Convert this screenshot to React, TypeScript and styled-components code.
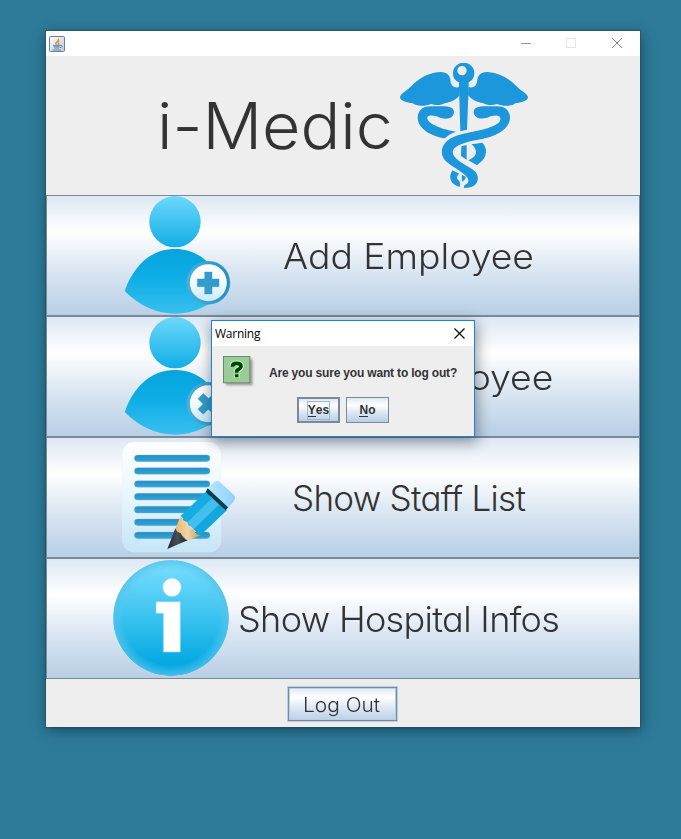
import React from 'react';
import styled, { createGlobalStyle } from 'styled-components';

const GlobalStyle = createGlobalStyle`
  * { box-sizing: border-box; }
  html, body { margin: 0; background: #2d7b99; overflow: hidden; }
`;

const metal = 'linear-gradient(#dde8f3 0%, #ffffff 30%, #dde8f3 60%, #b8cfe5 100%)';

const Desktop = styled.div`
  width: 681px;
  height: 839px;
  padding: 31px 41px 0 46px;
  background: #2d7b99;
  color: #333333;
  font-family: "Liberation Sans", Arial, sans-serif;
`;

const Window = styled.main`
  position: relative;
  width: 594px;
  height: 696px;
  display: flex;
  flex-direction: column;
  background: #eeeeee;
  box-shadow: 0 0 1px 1px rgba(40, 70, 85, 0.45), 1px 3px 12px rgba(0, 20, 30, 0.5);
`;

const TitleBar = styled.header`
  height: 25px;
  flex: none;
  display: flex;
  align-items: center;
  justify-content: space-between;
  padding: 0 17px 0 3px;
  background: #ffffff;
`;

const Controls = styled.div`
  display: flex;
  align-items: center;
  gap: 35px;
`;

const Banner = styled.section`
  height: 139px;
  flex: none;
  display: flex;
  align-items: flex-start;
  padding: 7px 0 0 111px;
`;

interface GothicProps { $size: number; $width: number; $stretch: number; $spacing?: number; $weight?: number }
const Gothic = styled.span<GothicProps>`
  display: block;
  flex: none;
  width: ${p => p.$width}px;
  font-family: Inter, "Open Sans", sans-serif;
  font-weight: ${p => p.$weight ?? 300};
  font-size: ${p => p.$size}px;
  font-feature-settings: "cv11" 1;
  letter-spacing: ${p => p.$spacing ?? 0}px;
  line-height: 1.2;
  white-space: nowrap;
  text-align: left;
  transform: scaleX(${p => p.$stretch});
  transform-origin: 0 50%;
`;

const Title = styled.h1`
  margin: 25px 0 0;
  font-weight: 300;
`;

const MenuButton = styled.button`
  height: 121px;
  flex: none;
  display: flex;
  align-items: center;
  padding: 0 0 0 63px;
  border: 1px solid #7a8a99;
  border-radius: 0;
  background: ${metal};
  color: #333333;
`;

const MenuLabel = styled.span<{ $offset: number }>`
  margin: 1px 0 0 ${p => p.$offset}px;
`;

const Footer = styled.footer`
  flex: 1;
  display: flex;
  justify-content: center;
  align-items: flex-start;
  padding: 7px 2px 0 0;
`;

const LogOutButton = styled.button`
  width: 111px;
  height: 36px;
  padding: 1px 0 0 15px;
  border: 1px solid #b8cfe5;
  border-radius: 0;
  box-shadow: inset 0 0 0 1px #7a8a99, inset 0 0 0 2px #b8cfe5;
  background: ${metal};
  color: #333333;
`;

const Dialog = styled.section`
  position: absolute;
  left: 165px;
  top: 289px;
  width: 264px;
  height: 117px;
  border: 1px solid #1883d7;
  background: #eeeeee;
  box-shadow: 1px 4px 13px 1px rgba(0, 0, 0, 0.4);
`;

const DialogBar = styled.header`
  height: 25px;
  display: flex;
  align-items: center;
  justify-content: space-between;
  padding: 0 9px 0 3px;
  background: #ffffff;
  color: #000000;
  font: 12px "Open Sans", sans-serif;
  letter-spacing: -0.25px;
`;

const DialogBody = styled.div`
  height: 51px;
  display: flex;
  padding: 10px 0 0 11px;
`;

const Message = styled.p`
  margin: 10px 0 0 14px;
  font-size: 12px;
  line-height: 14px;
  font-weight: bold;
  letter-spacing: -0.18px;
  white-space: nowrap;
`;

const DialogActions = styled.div`
  display: flex;
  gap: 6px;
  padding-left: 85px;
`;

const Choice = styled.button<{ $default?: boolean }>`
  width: 43px;
  height: 26px;
  padding: 0;
  display: flex;
  align-items: center;
  justify-content: center;
  border: ${p => (p.$default ? 2 : 1)}px solid #7a8a99;
  border-radius: 0;
  background: ${metal};
  color: #333333;
  font: bold 12px "Liberation Sans", Arial, sans-serif;
`;

const FocusFrame = styled.span<{ $focused?: boolean }>`
  padding: 1px 0;
  border: 1px solid ${p => (p.$focused ? '#a3b8cc' : 'transparent')};
  line-height: 15px;
  margin-top: 1px;
`;

const Mnemonic = styled.span`
  border-bottom: 1px solid #333333;
  display: inline-block;
  line-height: 12px;
`;

const IconSvg = styled.svg`
  display: block;
  flex: none;
`;

const JavaIcon = () => (
  <IconSvg width="16" height="16" viewBox="0 0 48 48">
    <defs>
      <linearGradient id="cupTile" x1="0" y1="0" x2="1" y2="1">
        <stop offset="0" stopColor="#fff" /><stop offset="1" stopColor="#b7cad9" />
      </linearGradient>
    </defs>
    <rect x="1.5" y="1.5" width="45" height="45" rx="3" fill="url(#cupTile)" stroke="#6b8194" strokeWidth="3" />
    <path d="M27 8q4 4-3 9t-1 9M31 14q-7 4-3 7t-1 6" fill="none" stroke="#ee8528" strokeWidth="3.4" />
    <path d="M12 28h22q6-1 5 3t-7 4M14 32h17M15 36h15M10 42h26" fill="none" stroke="#53809f" strokeWidth="2.6" />
  </IconSvg>
);

const Caduceus = () => (
  <IconSvg width="129" height="126" viewBox="30 24 387 378" fill="#1c97dc">
    <path fillRule="evenodd" d="M207 98V82C193 76 189 66 189 54a32 31 0 0 1 64 0c0 12-5 22-17 28v16l-5 126-20 5ZM202 47a14 14 0 1 0 28 0a14 14 0 1 0-28 0Z" />
    <path d="M208 96Q195 100 187 92Q180 84 181 72Q176 50 150 51C110 54 85 73 65 92C50 108 32 115 30 126C30 138 50 142 68 145C78 154 106 155 123 147C138 153 154 150 164 145C185 142 200 132 209 121Z" />
    <path d="M235 96Q248 100 256 92Q263 84 262 72Q267 50 293 51C333 54 358 73 378 92C393 108 412 115 414 126C414 138 394 142 376 145C366 154 338 155 321 147C306 153 290 150 280 145C259 142 244 132 234 121Z" />
    <path d="M192 172C192 156 175 153 150 154H122C96 154 83 168 83 189C84 222 126 245 165 250Q178 236 198 230C160 224 115 207 112 191C110 179 124 180 140 184C160 194 190 196 192 172Z" />
    <path d="M251 172C251 156 268 153 293 154H321C347 154 360 168 360 189C358 222 320 243 280 251C238 258 192 268 188 290C188 309 215 323 240 338C264 352 267 367 261 382C254 396 240 399 224 399Q219 397 223 391C236 384 238 377 232 368C221 351 184 335 167 318C149 298 152 272 175 255C200 235 260 232 300 217C325 208 333 199 331 190C330 180 318 180 302 184C283 194 253 195 251 172Z" />
    <path d="M245 268L277 263C294 280 291 306 271 322L261 331L235 316C258 307 268 288 245 268ZM214 274L230 270V314L213 303ZM187 346L208 356Q195 367 205 375Q213 382 209 396C181 389 174 367 187 346ZM215 359L228 366Q226 375 216 380Z" />
  </IconSvg>
);

const PersonIcon = ({ kind }: { kind: 'add' | 'remove' }) => (
  <IconSvg width="130" height="119" viewBox="0 18 390 357">
    <defs>
      <linearGradient id={`${kind}Head`} x2="0" y2="1"><stop stopColor="#6cd8fb" /><stop offset="1" stopColor="#12aee6" /></linearGradient>
      <linearGradient id={`${kind}Body`} x2="0" y2="1"><stop stopColor="#06a4dd" /><stop offset=".45" stopColor="#0eade6" /><stop offset="1" stopColor="#38c0ef" /></linearGradient>
      <linearGradient id={`${kind}Badge`} x2="0" y2="1"><stop stopColor="#fff" /><stop offset=".5" stopColor="#f3fbff" /><stop offset="1" stopColor="#c4e7f8" /></linearGradient>
      <linearGradient id={`${kind}Ring`}><stop stopColor="#4aaddd" /><stop offset="1" stopColor="#238fc5" /></linearGradient>
    </defs>
    <circle cx="195" cy="95" r="77" fill={`url(#${kind}Head)`} />
    <path d="M44 303C70 228 122 177 195 177S320 228 346 303C300 349 249 371 195 371S90 349 44 303Z" fill={`url(#${kind}Body)`} />
    <circle cx="295" cy="278" r="66" fill="#48add9" opacity=".65" />
    <circle cx="295" cy="278" r="60" fill={`url(#${kind}Badge)`} stroke={`url(#${kind}Ring)`} strokeWidth="9" />
    <path d="M284 246h22v21h21v23h-21v22h-22v-22h-22v-23h22z" fill="#329dcd" stroke="#2388c2" strokeWidth="1"
      transform={kind === 'remove' ? 'rotate(45 295 279)' : undefined} />
  </IconSvg>
);

const ListIcon = () => (
  <IconSvg width="130" height="119" viewBox="0 12 390 357">
    <defs>
      <linearGradient id="paper" x2="0" y2="1"><stop stopColor="#fff" /><stop offset=".5" stopColor="#e9f6fd" /><stop offset="1" stopColor="#c5e5f8" /></linearGradient>
      <linearGradient id="rule" x2="0" y2="1"><stop stopColor="#248ec5" /><stop offset="1" stopColor="#37a3d3" /></linearGradient>
      <linearGradient id="wood"><stop stopColor="#e8b96b" /><stop offset=".5" stopColor="#f2d5a4" /><stop offset="1" stopColor="#c6995b" /></linearGradient>
      <linearGradient id="lead"><stop stopColor="#24272e" /><stop offset=".5" stopColor="#4b4e58" /><stop offset="1" stopColor="#1b1d23" /></linearGradient>
      <linearGradient id="rubber"><stop stopColor="#b9e5ff" /><stop offset="1" stopColor="#91d2fa" /></linearGradient>
    </defs>
    <rect x="37" y="24" width="296" height="330" rx="36" fill="url(#paper)" stroke="#e0f2fc" strokeWidth="1" />
    {[63, 101, 140, 178, 217, 255, 294].map(y => <rect key={y} x="73" y={y} width="227" height="20" rx="10" fill="url(#rule)" stroke="#76c4e5" strokeWidth="1" />)}
    <path d="M289 170L309 147Q319 136 330 145L371 182Q379 190 372 201L351 226Z" fill="url(#rubber)" />
    <path d="M286 174L350 229L271 304L212 246Z" fill="#13ade4" />
    <path d="M307 192L329 211L251 286L231 266Z" fill="#42bfec" />
    <path d="M329 211L350 229L271 304L251 286Z" fill="#12a8df" />
    <path d="M293 163L354 220L347 229L287 174Z" fill="#073d4d" />
    <path d="M212 246Q219 262 232 264Q236 283 252 286Q254 302 271 304L233 320L196 284Z" fill="url(#wood)" />
    <path d="M196 283Q202 296 212 298Q218 314 233 319L172 345Z" fill="url(#lead)" />
  </IconSvg>
);

const InfoIcon = () => (
  <IconSvg width="130" height="119" viewBox="15 12 390 357">
    <defs>
      <linearGradient id="infoFill" x2="0" y2="1"><stop stopColor="#7bdfff" /><stop offset=".5" stopColor="#39c2ef" /><stop offset=".9" stopColor="#04a8e2" /></linearGradient>
      <radialGradient id="infoEdge"><stop offset=".82" stopColor="#5bc6ec" stopOpacity="0" /><stop offset="1" stopColor="#55c2ea" stopOpacity=".8" /></radialGradient>
    </defs>
    <circle cx="198" cy="189" r="173" fill="url(#infoFill)" />
    <circle cx="198" cy="189" r="173" fill="url(#infoEdge)" />
    <g fill="#fff" stroke="#7ed8f5" strokeWidth="2">
      <circle cx="201" cy="97" r="28" /><path d="M153 140h73v151h-51V175h-22z" />
    </g>
  </IconSvg>
);

const QuestionIcon = () => (
  <IconSvg width="32" height="32" viewBox="0 0 96 96">
    <defs><filter id="soft"><feGaussianBlur stdDeviation="3" /></filter></defs>
    <rect x="9" y="9" width="80" height="79" fill="#777" opacity=".65" filter="url(#soft)" />
    <rect x="1.5" y="1.5" width="79" height="79" fill="#99cc99" stroke="#668c66" strokeWidth="3" />
    <g fill="none" strokeLinejoin="round">
      <path d="M28 32Q28 22 41 22T54 31Q54 37 41 44V50M41 55V65" stroke="#ccffcc" strokeWidth="17" />
      <path d="M28 32Q28 22 41 22T54 31Q54 37 41 44V50M41 55V64" stroke="#004000" strokeWidth="11" />
    </g>
  </IconSvg>
);

export default function App() {
  return (
    <>
      <GlobalStyle />
      <Desktop>
        <Window>
          <TitleBar>
            <JavaIcon />
            <Controls>
              <IconSvg width="11" height="11"><path d="M1 5.5h10" stroke="#999" /></IconSvg>
              <IconSvg width="11" height="11"><path d="M.5.5h9v9h-9z" fill="none" stroke="#e5e5e5" /></IconSvg>
              <IconSvg width="11" height="11"><path d="M0 0l10 10M10 0L0 10" stroke="#888" /></IconSvg>
            </Controls>
          </TitleBar>
          <Banner>
            <Title><Gothic $size={64} $width={243} $stretch={1.035}>i-Medic</Gothic></Title>
            <Caduceus />
          </Banner>
          <MenuButton>
            <PersonIcon kind="add" />
            <MenuLabel $offset={43}><Gothic $size={35} $width={250} $stretch={1.066}>Add Employee</Gothic></MenuLabel>
          </MenuButton>
          <MenuButton>
            <PersonIcon kind="remove" />
            <MenuLabel $offset={21}><Gothic $size={35} $width={290} $stretch={1.066}>Delete Employee</Gothic></MenuLabel>
          </MenuButton>
          <MenuButton>
            <ListIcon />
            <MenuLabel $offset={52}><Gothic $size={35} $width={235} $stretch={1} $spacing={-0.72}>Show Staff List</Gothic></MenuLabel>
          </MenuButton>
          <MenuButton>
            <InfoIcon />
            <MenuLabel $offset={-2}><Gothic $size={35} $width={320} $stretch={1.03} $spacing={-0.65}>Show Hospital Infos</Gothic></MenuLabel>
          </MenuButton>
          <Footer>
            <LogOutButton><Gothic $size={20} $width={80} $stretch={1.045}>Log Out</Gothic></LogOutButton>
          </Footer>
          <Dialog role="dialog" aria-label="Warning">
            <DialogBar>
              Warning
              <IconSvg width="11" height="11"><path d="M.5.5l10 10M10.5.5l-10 10" stroke="#000" strokeWidth="1.1" /></IconSvg>
            </DialogBar>
            <DialogBody>
              <QuestionIcon />
              <Message>Are you sure you want to log out?</Message>
            </DialogBody>
            <DialogActions>
              <Choice $default><FocusFrame $focused><Mnemonic>Y</Mnemonic>es</FocusFrame></Choice>
              <Choice><FocusFrame><Mnemonic>N</Mnemonic>o</FocusFrame></Choice>
            </DialogActions>
          </Dialog>
        </Window>
      </Desktop>
    </>
  );
}
